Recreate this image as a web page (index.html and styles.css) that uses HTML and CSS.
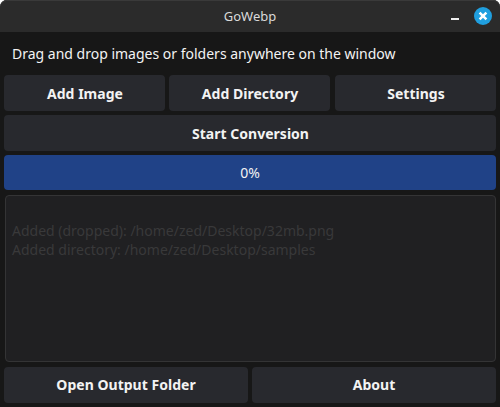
FILE: index.html
```
<!DOCTYPE html>
<html lang="en">
<head>
<meta charset="utf-8">
<title>GoWebp</title>
<link rel="stylesheet" href="styles.css">
</head>
<body>
<div class="window">
  <header class="titlebar">
    <span class="title">GoWebp</span>
    <div class="controls">
      <span class="minimize"></span>
      <svg class="close" width="18" height="18" viewBox="0 0 18 18"><circle cx="9" cy="9" r="9" fill="#209fdf"/><path d="M5.6 5.6l6.8 6.8M12.4 5.6l-6.8 6.8" stroke="#fff" stroke-width="2.5"/></svg>
    </div>
  </header>
  <main class="content">
    <p class="hint">Drag and drop images or folders anywhere on the window</p>
    <div class="row three">
      <button class="btn">Add Image</button>
      <button class="btn">Add Directory</button>
      <button class="btn">Settings</button>
    </div>
    <button class="btn">Start Conversion</button>
    <div class="progress">0%</div>
    <div class="log"><div>Added (dropped): /home/zed/Desktop/32mb.png</div><div>Added directory: /home/zed/Desktop/samples</div></div>
    <div class="row two">
      <button class="btn">Open Output Folder</button>
      <button class="btn">About</button>
    </div>
  </main>
</div>
</body>
</html>
```
FILE: styles.css
```
* { box-sizing: border-box; }
body { margin: 0; background: #fff; font-family: "Noto Sans", sans-serif; font-size: 14px; color: #f3f3f3; overflow: hidden; }
.window { width: 500px; height: 407px; display: flex; flex-direction: column; background: #171717; border-radius: 7px 7px 0 0; }
.titlebar { height: 32px; display: flex; align-items: center; justify-content: center; position: relative; background: #2b2b2b; border-radius: 7px 7px 0 0; box-shadow: inset 0 1px #3a3a3a; }
.title { font-size: 13px; color: #dadada; }
.controls { position: absolute; right: 8px; top: 7px; display: flex; gap: 15px; }
.minimize { width: 8px; height: 2px; margin-top: 11px; background: #eee; }
.close { display: block; }
.content { flex: 1; display: flex; flex-direction: column; gap: 4px; padding: 4px; }
.hint { margin: 0; height: 35px; line-height: 36px; padding-left: 8px; }
.row { display: grid; gap: 4px; }
.three { grid-template-columns: 161px 162px 161px; }
.three .btn { width: 161px; }
.two { grid-template-columns: repeat(2, 1fr); }
.btn { height: 36px; border: 0; border-radius: 4px; padding: 0 0 0 1px; background: #28292e; color: #f3f3f3; font: bold 14px "Noto Sans", sans-serif; letter-spacing: 0.02px; }
.two .btn { padding: 0 0 2px; }
.progress { height: 35px; line-height: 35px; border-radius: 4px; background: #204287; text-align: center; }
.log { flex: 1; margin: 1px 0 1px 1px; border: 1px solid #343435; border-radius: 4px; background: #202022; color: #39393a; padding: 25px 6px; line-height: 19px; }
```
